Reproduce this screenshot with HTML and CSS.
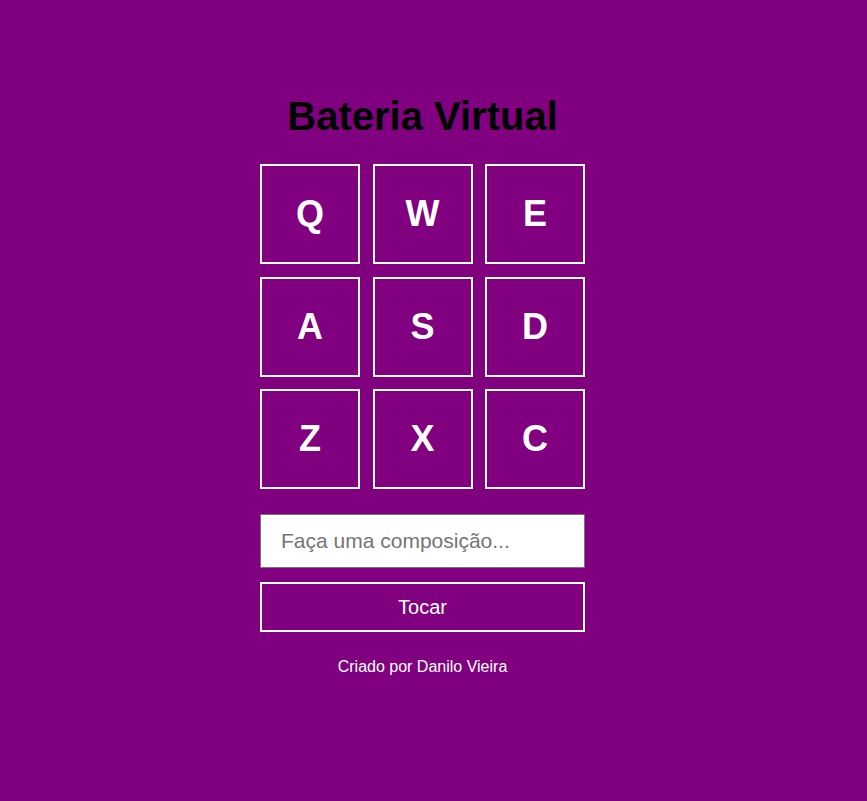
FILE: index.html
```html
<!DOCTYPE html>
<html lang="pt-BR">
<head>
<meta charset="utf-8">
<title>Bateria Virtual</title>
<link rel="stylesheet" href="styles.css">
</head>
<body>
<main class="app">
  <h1 class="title">Bateria Virtual</h1>
  <div class="keys">
    <div class="key">Q</div>
    <div class="key">W</div>
    <div class="key">E</div>
    <div class="key">A</div>
    <div class="key">S</div>
    <div class="key">D</div>
    <div class="key">Z</div>
    <div class="key">X</div>
    <div class="key">C</div>
  </div>
  <input class="composer" type="text" placeholder="Faça uma composição...">
  <button class="play">Tocar</button>
  <p class="credit">Criado por Danilo Vieira</p>
</main>
</body>
</html>
```

FILE: styles.css
```css
html, body {
  margin: 0;
  padding: 0;
}
body {
  background: #800080;
  font-family: "Liberation Sans", Arial, sans-serif;
  min-height: 801px;
  padding-right: 22px;
}
.app {
  width: 325px;
  margin: 0 auto;
  padding-top: 93px;
  display: flex;
  flex-direction: column;
}
.title {
  margin: 0 0 25px;
  font-size: 40px;
  line-height: 46px;
  font-weight: bold;
  color: #000;
  text-align: center;
  white-space: nowrap;
}
.keys {
  display: grid;
  grid-template-columns: repeat(3, 100px);
  justify-content: space-between;
  row-gap: 12.5px;
}
.key {
  box-sizing: border-box;
  width: 100px;
  height: 100px;
  border: 2px solid #fff;
  display: flex;
  align-items: center;
  justify-content: center;
  color: #fff;
  font-size: 36px;
  font-weight: bold;
}
.composer {
  box-sizing: border-box;
  margin: 25px 0 0;
  width: 325px;
  height: 54px;
  padding: 0 20px;
  border: 1px solid #767676;
  background: #fff;
  font-family: "Liberation Sans", Arial, sans-serif;
  font-size: 21px;
  color: #000;
  outline: none;
}
.composer::placeholder {
  color: #757575;
}
.play {
  box-sizing: border-box;
  margin: 14px 0 0;
  width: 325px;
  height: 50px;
  border: 2px solid #fff;
  background: transparent;
  color: #fff;
  font-family: "Liberation Sans", Arial, sans-serif;
  font-size: 20px;
  cursor: pointer;
}
.credit {
  margin: 26px 0 0;
  color: #fff;
  font-size: 16px;
  line-height: 18px;
  text-align: center;
}
```
